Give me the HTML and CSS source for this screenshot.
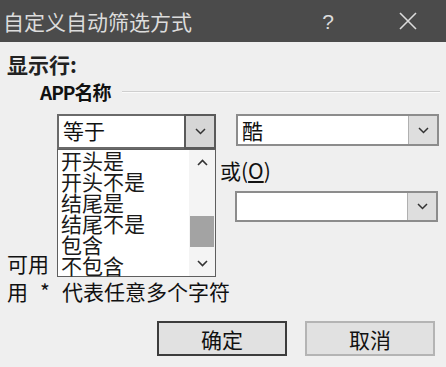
FILE: index.html
```html
<!DOCTYPE html>
<html lang="zh-CN">

<head>
    <meta charset="UTF-8">
    <meta name="viewport" content="width=device-width, initial-scale=1.0">
    <title>自定义自动筛选方式</title>

    <link rel="stylesheet" href="styles.css">
</head>

<body>
    <div class="dialog">
        <div class="titlebar">
            <span class="title">自定义自动筛选方式</span>
            <span class="help">?</span>
            <svg class="close" width="20" height="18" viewBox="0 0 20 18">
                <path d="M2 1 L18 17 M18 1 L2 17" stroke="#dcdcdc" stroke-width="1.6" fill="none" />
            </svg>
        </div>

        <div class="content">
            <div class="show-row">显示行:</div>
            <div class="field-title">
                <span class="field-name">APP名称</span>
                <span class="rule"></span>
            </div>

            <div class="criteria">
                <div class="combo combo-op">
                    <span class="combo-text">等于</span>
                    <span class="combo-btn">
                        <svg width="11" height="7" viewBox="0 0 11 7"><path d="M1 1 L5.5 5.5 L10 1" stroke="#333" stroke-width="1.5" fill="none" /></svg>
                    </span>

                    <div class="droplist">
                        <ul class="items">
                            <li>开头是</li>
                            <li>开头不是</li>
                            <li>结尾是</li>
                            <li>结尾不是</li>
                            <li>包含</li>
                            <li>不包含</li>
                        </ul>
                        <div class="scrollbar">
                            <span class="arrow">
                                <svg width="11" height="7" viewBox="0 0 11 7"><path d="M1 6 L5.5 1.5 L10 6" stroke="#333" stroke-width="1.6" fill="none" /></svg>
                            </span>
                            <div class="track"><div class="thumb"></div></div>
                            <span class="arrow">
                                <svg width="11" height="7" viewBox="0 0 11 7"><path d="M1 1 L5.5 5.5 L10 1" stroke="#333" stroke-width="1.6" fill="none" /></svg>
                            </span>
                        </div>
                    </div>
                </div>

                <div class="combo combo-val">
                    <span class="combo-text">酷</span>
                    <span class="combo-btn">
                        <svg width="11" height="7" viewBox="0 0 11 7"><path d="M1 1 L5.5 5.5 L10 1" stroke="#333" stroke-width="1.5" fill="none" /></svg>
                    </span>
                </div>
            </div>

            <div class="logic">或(<u>O</u>)</div>

            <div class="criteria second">
                <div class="combo combo-val short">
                    <span class="combo-text"></span>
                    <span class="combo-btn">
                        <svg width="11" height="7" viewBox="0 0 11 7"><path d="M1 1 L5.5 5.5 L10 1" stroke="#333" stroke-width="1.5" fill="none" /></svg>
                    </span>
                </div>
            </div>

            <p class="hint">可用<span class="wild"> ? </span>代表单个字符</p>
            <p class="hint">用<span class="wild"> * </span>代表任意多个字符</p>

            <div class="actions">
                <button class="btn default">确定</button>
                <button class="btn">取消</button>
            </div>
        </div>
    </div>
</body>

</html>
```

FILE: styles.css
```css
body {
    margin: 0;
    background-color: #efefef;
    font-family: "Noto Sans CJK SC", "Noto Sans", sans-serif;
    color: #111;
}

.dialog {
    width: 446px;
    height: 367px;
    overflow: hidden;
}

.titlebar {
    height: 42px;
    background-color: #4b4b4b;
    color: #dcdcdc;
    display: flex;
    align-items: center;
    padding-left: 3px;
}

.title {
    font-size: 21px;
    line-height: 1;
}

.help {
    margin-left: auto;
    font-size: 21px;
    line-height: 1;
    font-family: "Liberation Sans", sans-serif;
}

.close {
    margin-left: 64px;
    margin-right: 28px;
}

.content {
    padding: 0 6px 0 7px;
    font-size: 21px;
    line-height: 24px;
}

.show-row {
    margin-top: 10px;
    font-weight: bold;
    color: #222;
}

.field-title {
    display: flex;
    align-items: center;
    margin-top: 4px;
    padding-left: 33px;
}

.field-name {
    font-weight: bold;
    font-size: 19px;
    letter-spacing: -1px;
}

.rule {
    flex: 1;
    margin-left: 11px;
    height: 1px;
    background-color: #cfcfcf;
    border-bottom: 1px solid #fafafa;
}

.criteria {
    display: flex;
    align-items: flex-start;
    margin-top: 10px;
}

.criteria.second {
    margin-top: 9px;
    padding-left: 228px;
}

.combo {
    position: relative;
    display: flex;
    align-items: stretch;
    background-color: #fff;
    border: 2px solid #8c8c8c;
    box-sizing: border-box;
}

.combo-op {
    margin-left: 50px;
    width: 159px;
    height: 35px;
    border-color: #6a6a6a;
    z-index: 2;
}

.combo-val {
    margin-left: 20px;
    width: 203px;
    height: 32px;
}

.combo-val.short {
    margin-left: 0;
    height: 31px;
}

.combo-text {
    flex: 1;
    padding-left: 4px;
    line-height: 28px;
}

.combo-btn {
    width: 28px;
    display: flex;
    align-items: center;
    justify-content: center;
    background-color: #dedede;
    border-left: 1px solid #b0b0b0;
}

.combo-op .combo-btn {
    border: 2px solid #5a5a5a;
    margin: -2px -2px -2px 0;
    background-color: #d6d6d6;
}

.droplist {
    position: absolute;
    top: calc(100% + 2px);
    left: -2px;
    width: 159px;
    height: 128px;
    box-sizing: border-box;
    border: 1px solid #5e5e5e;
    background-color: #fff;
    display: flex;
    z-index: 3;
}

.items {
    flex: 1;
    list-style: none;
    margin: 0;
    padding: 0 0 0 3px;
    font-size: 21px;
    line-height: 21px;
    color: #1a1a1a;
}

.scrollbar {
    width: 26px;
    display: flex;
    flex-direction: column;
    background-color: #f4f4f4;
}

.arrow {
    height: 25px;
    display: flex;
    align-items: center;
    justify-content: center;
}

.track {
    flex: 1;
    padding: 41px 1px 0;
}

.thumb {
    height: 31px;
    background-color: #a3a3a3;
}

.logic {
    margin-top: 9px;
    padding-left: 213px;
}

.logic u {
    text-underline-offset: 2px;
}

.hint {
    margin: 27px 0 0;
    line-height: 28px;
}

.hint + .hint {
    margin-top: 0;
}

.wild {
    display: inline-block;
    width: 34px;
    text-align: center;
}

.actions {
    display: flex;
    justify-content: flex-end;
    gap: 18px;
    margin-top: 16px;
    margin-right: 5px;
}

.btn {
    width: 130px;
    height: 35px;
    font-family: inherit;
    font-size: 21px;
    color: #111;
    background-color: #e1e1e1;
    border: 2px solid #b4b4b4;
    padding: 0;
}

.btn.default {
    border-color: #3c3c3c;
}
```
